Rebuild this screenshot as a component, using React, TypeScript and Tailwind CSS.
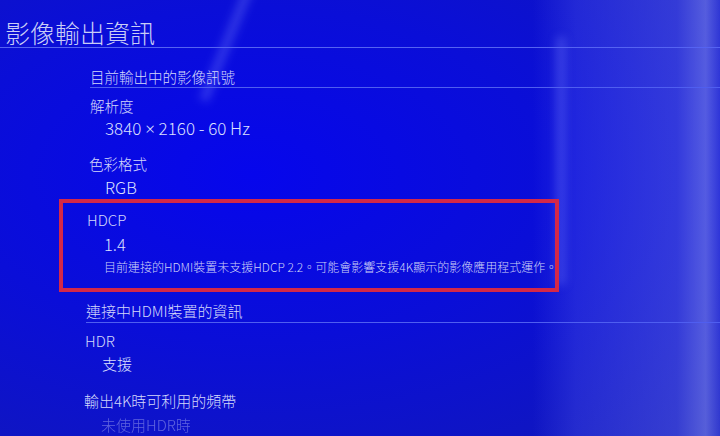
const font = "font-['Noto_Sans_CJK_TC','Noto_Sans',sans-serif]";

const Row = ({ text, className }: { text: React.ReactNode; className: string }) => (
  <div className={`whitespace-nowrap ${className}`}>{text}</div>
);

export default function App() {
  return (
    <div
      className={`relative h-[436px] w-[720px] overflow-hidden ${font} font-light text-[#d4d8fb] bg-[radial-gradient(ellipse_at_35%_40%,#0606ec_0%,#0a0ed8_45%,#1219b8_100%)]`}
    >
      {/* reflections from the photo */}
      <div className="pointer-events-none absolute inset-0 bg-[linear-gradient(90deg,transparent_0%,transparent_74%,rgba(110,120,255,0.22)_80%,rgba(130,140,255,0.32)_94%,rgba(170,180,255,0.45)_98%,rgba(120,130,255,0.3)_100%)]" />
      <div className="pointer-events-none absolute left-[556px] top-[36px] h-[250px] w-[10px] rounded-full bg-[#7a86ff]/30 blur-[4px]" />
      <div className="pointer-events-none absolute left-[222px] top-[-20px] h-[125px] w-[10px] rotate-[22deg] bg-[#8090ff]/30 blur-[4px]" />

      <div className="relative flex flex-col">
        <div className="border-b border-[#5563f2] pl-[5px] pt-[17px] text-[25px] leading-[30px] text-[#c9cdf6]">
          影像輸出資訊
        </div>

        <div className="flex flex-col pl-[59px]">
          <div className="ml-[31px] mt-[19px] border-b border-[#4f5ef0] text-[14.5px] leading-[20px]">
            目前輸出中的影像訊號
          </div>

          <Row text="解析度" className="ml-[31px] mt-[8px] text-[14.5px] leading-[20px]" />
          <Row
            text={
              <>
                3840 <span className="font-['Noto_Sans',sans-serif]">×</span> 2160 - 60 Hz
              </>
            }
            className="ml-[46px] mt-[2px] text-[17px] leading-[20px] text-[#dde0ff]"
          />

          <Row text="色彩格式" className="ml-[30px] mt-[15px] text-[14.5px] leading-[20px]" />
          <Row text="RGB" className="ml-[46px] mt-[3px] text-[16.5px] leading-[20px] text-[#dde0ff]" />

          <div className="mt-[2px] w-[500px] border-[4px] border-[#d42848] pb-[12px] pl-[24px] pt-[7px]">
            <Row text="HDCP" className="text-[15px] leading-[20px]" />
            <Row text="1.4" className="ml-[17px] mt-[4px] text-[16.5px] leading-[20px] text-[#dde0ff]" />
            <Row
              text="目前連接的HDMI裝置未支援HDCP 2.2。可能會影響支援4K顯示的影像應用程式運作。"
              className="ml-[17px] mt-[4px] text-[12px] leading-[18px] text-[#cdd1f8]"
            />
          </div>

          <div className="ml-[27px] mt-[8px] border-b border-[#4f5ef0] text-[15px] leading-[22px]">
            連接中HDMI裝置的資訊
          </div>
          <Row text="HDR" className="ml-[26px] mt-[8px] text-[15px] leading-[20px]" />
          <Row text="支援" className="ml-[43px] mt-[3px] text-[15px] leading-[20px] text-[#dde0ff]" />

          <Row text="輸出4K時可利用的頻帶" className="ml-[25px] mt-[17px] text-[15px] leading-[20px]" />
          <Row text="未使用HDR時" className="ml-[42px] mt-[4px] text-[15px] leading-[20px] opacity-40" />
        </div>
      </div>
    </div>
  );
}
